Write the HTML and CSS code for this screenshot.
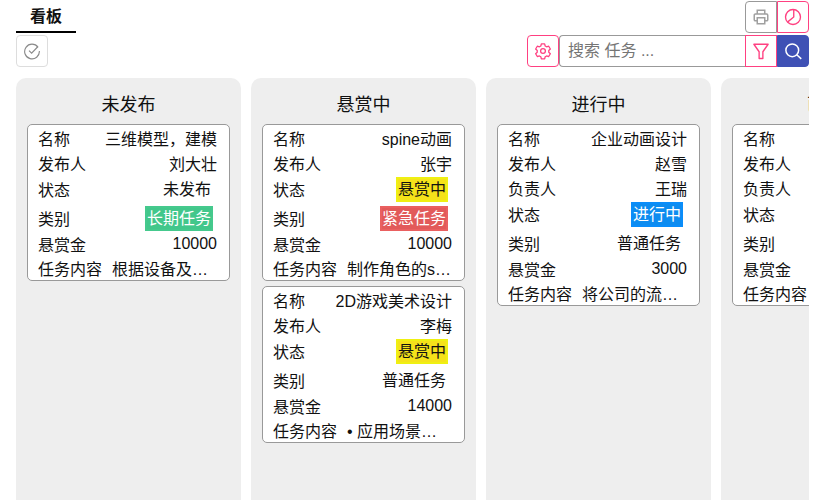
FILE: index.html
```html
<!DOCTYPE html>
<html lang="zh">
<head>
<meta charset="utf-8">
<title>看板</title>
<link rel="stylesheet" href="styles.css">
</head>
<body>
<div class="page">
  <div class="topbar">
    <div class="tab">看板</div>
    <div class="btn-group">
      <button class="icon-btn gray joined-left" aria-label="打印">
        <svg viewBox="0 0 24 24" class="icon"><path d="M7 8V3h10v5M7 17H4.500A1.500 1.500 0 0 1 3 15.500V9.500A1.500 1.500 0 0 1 4.500 8h15A1.500 1.500 0 0 1 21 9.500v6a1.500 1.500 0 0 1-1.500 1.500H17M7 13h10v8H7z" fill="none" stroke="#a0a0a0" stroke-width="2"/></svg>
      </button>
      <button class="icon-btn pink joined-right" aria-label="统计">
        <svg viewBox="0 0 24 24" class="icon"><circle cx="12" cy="12" r="10" fill="none" stroke="#ff4081" stroke-width="1.800"/><path d="M13 2.500V12L5 18.500" fill="none" stroke="#ff4081" stroke-width="1.800"/></svg>
      </button>
    </div>
  </div>
  <div class="toolbar">
    <button class="icon-btn light" aria-label="完成">
      <svg viewBox="0 0 24 24" class="icon"><path d="M20 7A9.800 9.800 0 1 0 21.800 12" fill="none" stroke="#8a8a8a" stroke-width="1.500"/><path d="M8 11.500l3.500 3.500L20 6" fill="none" stroke="#8a8a8a" stroke-width="1.500"/></svg>
    </button>
    <div class="search">
      <button class="icon-btn pink gear" aria-label="设置">
        <svg viewBox="0 0 24 24" class="icon"><path d="M9.800 2.500h4.400l.7 2.800 1.900 1.100 2.800-.8 2.200 3.800-2.100 2v2.200l2.100 2-2.200 3.800-2.800-.8-1.900 1.100-.7 2.800H9.800l-.7-2.800-1.900-1.100-2.800.8-2.200-3.800 2.100-2v-2.200l-2.100-2 2.200-3.800 2.800.8 1.900-1.100z" fill="none" stroke="#ff4081" stroke-width="1.700" stroke-linejoin="round"/><circle cx="12" cy="12" r="3.200" fill="none" stroke="#ff4081" stroke-width="1.700"/></svg>
      </button>
      <input class="search-input" type="text" placeholder="搜索 任务 ...">
      <button class="icon-btn pink square" aria-label="筛选">
        <svg viewBox="0 0 24 24" class="icon"><path d="M2.500 3h19L14.500 13v9h-5v-9z" fill="none" stroke="#ff4081" stroke-width="1.800" stroke-linejoin="round"/></svg>
      </button>
      <button class="icon-btn blue" aria-label="搜索">
        <svg viewBox="0 0 24 24" class="icon"><circle cx="11" cy="11" r="8.500" fill="none" stroke="#fff" stroke-width="2"/><path d="M17 17l6 5.500" stroke="#fff" stroke-width="2"/></svg>
      </button>
    </div>
  </div>
  <div class="board">
    <section class="column">
      <h2 class="column-title">未发布</h2>
      <article class="card">
        <div class="row"><span class="label">名称</span><span class="value">三维模型，建模</span></div>
        <div class="row"><span class="label">发布人</span><span class="value">刘大壮</span></div>
        <div class="row tag-row"><span class="label">状态</span><span class="tag">未发布</span></div>
        <div class="row tag-row"><span class="label">类别</span><span class="tag green">长期任务</span></div>
        <div class="row money"><span class="label">悬赏金</span><span class="value num">10000</span></div>
        <div class="row money"><span class="label">任务内容</span><span class="value clip">根据设备及场景完成三维建模</span></div>
      </article>
    </section>
    <section class="column">
      <h2 class="column-title">悬赏中</h2>
      <article class="card">
        <div class="row"><span class="label">名称</span><span class="value">spine动画</span></div>
        <div class="row"><span class="label">发布人</span><span class="value">张宇</span></div>
        <div class="row tag-row"><span class="label">状态</span><span class="tag yellow">悬赏中</span></div>
        <div class="row tag-row"><span class="label">类别</span><span class="tag red">紧急任务</span></div>
        <div class="row money"><span class="label">悬赏金</span><span class="value num">10000</span></div>
        <div class="row money"><span class="label">任务内容</span><span class="value clip">制作角色的spine动画效果</span></div>
      </article>
      <article class="card">
        <div class="row"><span class="label">名称</span><span class="value">2D游戏美术设计</span></div>
        <div class="row"><span class="label">发布人</span><span class="value">李梅</span></div>
        <div class="row tag-row"><span class="label">状态</span><span class="tag yellow">悬赏中</span></div>
        <div class="row tag-row"><span class="label">类别</span><span class="tag">普通任务</span></div>
        <div class="row money"><span class="label">悬赏金</span><span class="value num">14000</span></div>
        <div class="row money"><span class="label">任务内容</span><span class="value clip">• 应用场景：游戏美术设计</span></div>
      </article>
    </section>
    <section class="column">
      <h2 class="column-title">进行中</h2>
      <article class="card">
        <div class="row"><span class="label">名称</span><span class="value">企业动画设计</span></div>
        <div class="row"><span class="label">发布人</span><span class="value">赵雪</span></div>
        <div class="row"><span class="label">负责人</span><span class="value">王瑞</span></div>
        <div class="row tag-row"><span class="label">状态</span><span class="tag blue">进行中</span></div>
        <div class="row tag-row"><span class="label">类别</span><span class="tag">普通任务</span></div>
        <div class="row money"><span class="label">悬赏金</span><span class="value num">3000</span></div>
        <div class="row money"><span class="label">任务内容</span><span class="value clip">将公司的流程制作成动画</span></div>
      </article>
    </section>
    <section class="column">
      <h2 class="column-title">已完成</h2>
      <article class="card">
        <div class="row"><span class="label">名称</span><span class="value">游戏原画设计</span></div>
        <div class="row"><span class="label">发布人</span><span class="value">陈明</span></div>
        <div class="row"><span class="label">负责人</span><span class="value">周杰</span></div>
        <div class="row tag-row"><span class="label">状态</span><span class="tag">已完成</span></div>
        <div class="row tag-row"><span class="label">类别</span><span class="tag">普通任务</span></div>
        <div class="row money"><span class="label">悬赏金</span><span class="value num">5000</span></div>
        <div class="row money"><span class="label">任务内容</span><span class="value clip">完成游戏角色原画</span></div>
      </article>
    </section>
  </div>
</div>
</body>
</html>
```
FILE: styles.css
```css
* { box-sizing: border-box; }
html, body { margin: 0; height: 100%; overflow: hidden; background: #fff; }
body { font-family: "Liberation Sans", "Noto Sans CJK SC", sans-serif; font-size: 16px; color: #111; }
.page { width: 793px; margin-left: 16px; height: 500px; display: flex; flex-direction: column; overflow: hidden; }
.topbar { display: flex; justify-content: space-between; height: 33px; padding-top: 1px; }
.tab { width: 60px; height: 32px; border-bottom: 2px solid #000; text-align: center; font-weight: 700; line-height: 31px; color: #111; }
.btn-group { display: flex; }
.toolbar { display: flex; justify-content: space-between; height: 32px; margin-top: 2px; }
.search { display: flex; }
.icon-btn { width: 32px; height: 32px; padding: 0; background: #fff; border: 1px solid #999; border-radius: 0; display: flex; align-items: center; justify-content: center; }
.icon { width: 18px; height: 18px; display: block; }
.gray { border-color: #999; }
.pink { border-color: #ff4081; }
.light { border-color: #ddd; border-radius: 4px; }
.joined-left { border-radius: 4px 0 0 4px; }
.joined-right { border-radius: 0 4px 4px 0; }
.gear { border-radius: 4px; }
.square { border-radius: 0; }
.icon-btn.blue { background: #3f51b5; border-color: #3f51b5; border-radius: 0 4px 4px 0; }
.search-input { width: 186px; height: 32px; border: 1px solid #999; border-right: 0; border-radius: 4px 0 0 4px; padding: 0 8px; font: inherit; outline: none; }
.search-input::placeholder { color: #757575; }
.board { display: flex; gap: 10px; margin-top: 11px; flex: 1; min-height: 0; }
.column { flex: 0 0 225px; width: 225px; min-width: 0; background: #eee; border-radius: 10px 10px 0 0; padding: 0 11px; }
.column-title { margin: 0; height: 46px; line-height: 54px; font-size: 18px; font-weight: 400; text-align: center; white-space: nowrap; }
.card { background: #fff; border: 1px solid #999; border-radius: 5px; padding: 1px 12px 0 10px; margin-bottom: 5px; overflow: hidden; }
.row { display: flex; justify-content: space-between; align-items: flex-start; gap: 10px; height: 25px; white-space: nowrap; }
.tag-row { height: 29px; padding-top: 1px; }
.tag-row + .tag-row { height: 27px; }
.money { height: 24px; }
.label { flex: none; }
.value { min-width: 0; }
.num { padding-top: 3px; }
.clip { flex: 1; overflow: hidden; text-overflow: ellipsis; }
.tag { margin: 0 4px 0 0; border: 2px solid transparent; border-width: 2px; padding: 0; height: 25px; line-height: 21px; display: block; }
.tag.green { background: #42c78b; border-color: #45c98d; color: #fff; }
.tag.yellow { background: #f5e21a; border-color: #eff012; }
.tag.red { background: #e25a5a; border-color: #ea6060; color: #fff; }
.tag.blue { background: #0d8cf0; border-color: #0a8dfa; color: #fff; }
```
